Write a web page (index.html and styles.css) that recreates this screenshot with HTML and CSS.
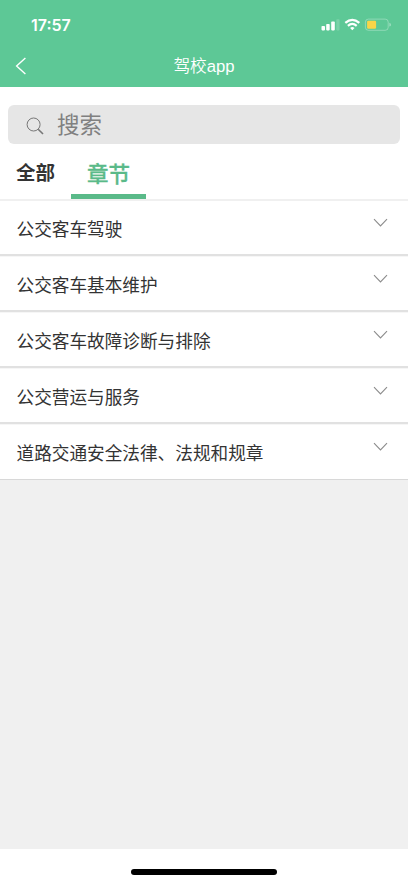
FILE: index.html
```html
<!DOCTYPE html>
<html lang="zh-CN">
<head>
<meta charset="utf-8">
<meta name="viewport" content="width=device-width, initial-scale=1">
<title>驾校app</title>
<link rel="stylesheet" href="styles.css">
</head>
<body>
<div class="screen">
  <header class="header">
    <div class="status">
      <span class="time">17:57</span>
      <svg class="status-icons" width="70" height="14" viewBox="0 0 70 14">
        <g fill="#fff">
          <rect x="0.5" y="9" width="3.5" height="4.4" rx="0.8"/>
          <rect x="5.2" y="7" width="3.5" height="6.4" rx="0.8"/>
          <rect x="10.2" y="4.6" width="3.6" height="8.8" rx="0.8"/>
          <rect x="15.3" y="2.2" width="3.3" height="11.2" rx="0.8" opacity=".18"/>
        </g>
        <g fill="none" stroke="#fff" stroke-width="2.2">
          <path d="M24.3 5.9Q31.3-.3 38.3 5.9"/>
          <path d="M26.9 8.8Q31.3 5.1 35.7 8.8"/>
        </g>
        <path d="M29.1 10.9Q31.3 9.2 33.5 10.9L31.3 13.3Z" fill="#fff"/>
        <rect x="44.4" y="2.1" width="22.8" height="11.2" rx="3" fill="none" stroke="#fff" stroke-opacity=".3"/>
        <rect x="46.1" y="3.8" width="9" height="7.9" rx="1.2" fill="#f8d548"/>
        <path d="M68.4 5.8Q70 6.4 70 7.7Q70 9 68.4 9.6Z" fill="#fff" opacity=".4"/>
      </svg>
    </div>
    <div class="navbar">
      <svg class="back" width="12" height="18" viewBox="0 0 12 18"><path d="M10.4 1L1.6 9L10.4 17" fill="none" stroke="#fff" stroke-width="1.4"/></svg>
      <h1 class="title">驾校app</h1>
    </div>
  </header>
  <div class="search">
    <svg width="18" height="18" viewBox="0 0 18 18" fill="none" stroke="#777"><circle cx="7.6" cy="7.5" r="6.5" stroke-width="1"/><path d="M12.2 12.2L17 17" stroke-width="1.6"/></svg>
    <span class="placeholder">搜索</span>
  </div>
  <nav class="tabs">
    <span class="tab">全部</span>
    <span class="tab active">章节</span>
  </nav>
  <ul class="list">
    <li class="item"><span>公交客车驾驶</span><svg class="chevron" width="15" height="10" viewBox="0 0 15 10"><path d="M1 1.2L7.5 8L14 1.2"/></svg></li>
    <li class="item"><span>公交客车基本维护</span><svg class="chevron" width="15" height="10" viewBox="0 0 15 10"><path d="M1 1.2L7.5 8L14 1.2"/></svg></li>
    <li class="item"><span>公交客车故障诊断与排除</span><svg class="chevron" width="15" height="10" viewBox="0 0 15 10"><path d="M1 1.2L7.5 8L14 1.2"/></svg></li>
    <li class="item"><span>公交营运与服务</span><svg class="chevron" width="15" height="10" viewBox="0 0 15 10"><path d="M1 1.2L7.5 8L14 1.2"/></svg></li>
    <li class="item"><span>道路交通安全法律、法规和规章</span><svg class="chevron" width="15" height="10" viewBox="0 0 15 10"><path d="M1 1.2L7.5 8L14 1.2"/></svg></li>
  </ul>
  <div class="filler"></div>
  <footer class="footer"><div class="home-indicator"></div></footer>
</div>
</body>
</html>
```
FILE: styles.css
```css
* { box-sizing: border-box; }
body {
  margin: 0;
  background: #fff;
  color: #333;
  font-family: "Liberation Sans", "Noto Sans CJK SC", sans-serif;
}
.screen {
  display: flex;
  flex-direction: column;
  height: 883px;
  overflow: hidden;
}
.header {
  flex: none;
  height: 87px;
  background: #5dc896;
  color: #fff;
}
.status {
  display: flex;
  justify-content: space-between;
  height: 44px;
  padding: 17px 17px 0 31px;
}
.time {
  font: 600 16px/16px Inter, sans-serif;
}
.status-icons { flex: none; }
.navbar {
  display: grid;
  grid-template-columns: 1fr auto 1fr;
  align-items: center;
  height: 43px;
  padding: 0 15px;
}
.title {
  grid-column: 2;
  margin: 0;
  padding-top: 2px;
  font-size: 16.7px;
  font-weight: 350;
  line-height: 24px;
}
.search {
  display: flex;
  align-items: center;
  gap: 13px;
  flex: none;
  height: 39px;
  margin: 18px 8px 0;
  padding: 0 18px;
  border-radius: 6px;
  background: #e6e6e6;
}
.search svg { margin-top: 3px; }
.placeholder {
  padding-top: 2px;
  color: #808080;
  font-size: 22.5px;
  line-height: 39px;
}
.tabs {
  display: flex;
  flex: none;
  height: 57px;
  border-bottom: 2px solid #f0f0f0;
}
.tab {
  padding: 0 16px;
  font-size: 19.5px;
  font-weight: 700;
  line-height: 58px;
}
.active {
  height: 55px;
  border-bottom: 5px solid #5aba89;
  color: #5aba89;
  font-size: 21.5px;
  font-weight: 500;
  line-height: 62px;
  -webkit-text-stroke: 0.3px #5aba89;
}
.list {
  margin: 0;
  padding: 0;
  list-style: none;
}
.item {
  display: flex;
  justify-content: space-between;
  height: 56.1px;
  padding: 0 20px 0 16.5px;
  border-bottom: 2px solid #e1e1e1;
  font-size: 17.65px;
  line-height: 58px;
}
.item:first-child {
  height: 55px;
}
.item + .item {
  box-shadow: inset 0 1px #f6f6f6;
  line-height: 60px;
}
.item:last-child {
  height: 55.5px;
  border-bottom: 1px solid #d8d8d8;
}
.chevron {
  flex: none;
  margin-top: 18px;
  fill: none;
  stroke: #8c8c8c;
  stroke-width: 1.1;
}
.item:first-child .chevron { margin-top: 17px; }
.filler {
  flex: 1;
  background: #f0f0f0;
}
.footer {
  display: flex;
  flex: none;
  justify-content: center;
  height: 34px;
  padding-top: 20px;
}
.home-indicator {
  width: 146px;
  height: 6px;
  border-radius: 3px;
  background: #000;
}
```
